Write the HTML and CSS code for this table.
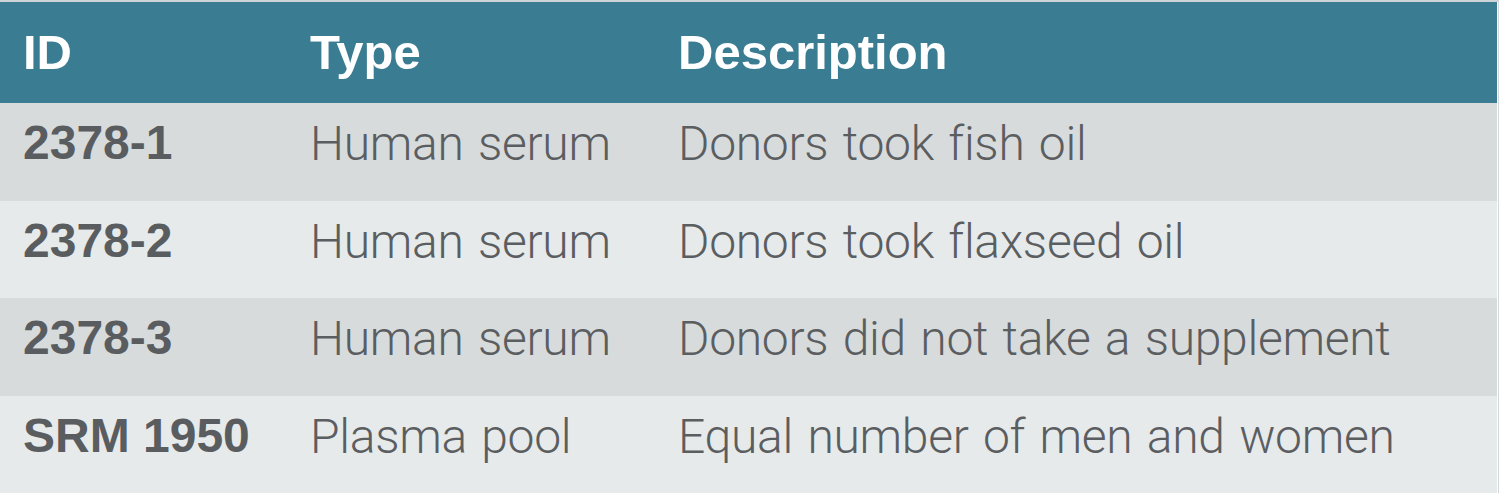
FILE: index.html
```html
<!DOCTYPE html>
<html lang="en">
<head>
<meta charset="utf-8">
<title>Samples</title>
<link rel="stylesheet" href="styles.css">
</head>
<body>
<div class="frame">
  <table class="samples">
    <colgroup>
      <col class="c-id">
      <col class="c-type">
      <col class="c-desc">
    </colgroup>
    <thead>
      <tr class="head">
        <th>ID</th>
        <th>Type</th>
        <th>Description</th>
      </tr>
    </thead>
    <tbody>
      <tr class="r1 dark">
        <td class="id">2378-1</td>
        <td>Human serum</td>
        <td>Donors took fish oil</td>
      </tr>
      <tr class="r2 light">
        <td class="id">2378-2</td>
        <td>Human serum</td>
        <td>Donors took flaxseed oil</td>
      </tr>
      <tr class="r3 dark">
        <td class="id">2378-3</td>
        <td>Human serum</td>
        <td>Donors did not take a supplement</td>
      </tr>
      <tr class="r4 light">
        <td class="id">SRM 1950</td>
        <td>Plasma pool</td>
        <td>Equal number of men and women</td>
      </tr>
    </tbody>
  </table>
</div>
</body>
</html>
```

FILE: styles.css
```css
html, body {
  margin: 0;
  padding: 0;
  background: #ffffff;
}

.frame {
  width: 1498px;
  border-top: 2px solid #cdd3d6;
  border-right: 1px solid #d3d8db;
}

.samples {
  width: 1497px;
  border-collapse: collapse;
  table-layout: fixed;
}

.c-id { width: 287px; }
.c-type { width: 368px; }
.c-desc { width: auto; }

.samples th,
.samples td {
  padding: 0 0 0 23px;
  vertical-align: top;
  text-align: left;
  white-space: nowrap;
  overflow: hidden;
}

.head {
  background: #3a7c91;
}

.head th {
  height: 101px;
  box-sizing: border-box;
  padding-top: 26px;
  font-family: "Liberation Sans", Arial, sans-serif;
  font-weight: 700;
  font-size: 49px;
  line-height: 49px;
  color: #ffffff;
}

.samples td {
  box-sizing: border-box;
  padding-top: 17px;
  font-family: Roboto, "Liberation Sans", sans-serif;
  font-weight: 300;
  font-size: 48px;
  line-height: 48px;
  letter-spacing: -0.3px;
  word-spacing: 3px;
  color: #5b5e61;
}

.samples td.id {
  padding-top: 16px;
  font-family: "Liberation Sans", Arial, sans-serif;
  font-weight: 700;
  font-size: 48px;
  line-height: 48px;
  letter-spacing: 0;
  word-spacing: 0;
  color: #5a5d60;
}

.samples td.id.wide {
  letter-spacing: 0.5px;
}

.dark { background: #d8dbdc; }
.light { background: #e7eaeb; }

.r1 td { height: 98px; }
.r2 td { height: 97px; }
.r3 td { height: 98px; }
.r4 td { height: 97px; }
```
